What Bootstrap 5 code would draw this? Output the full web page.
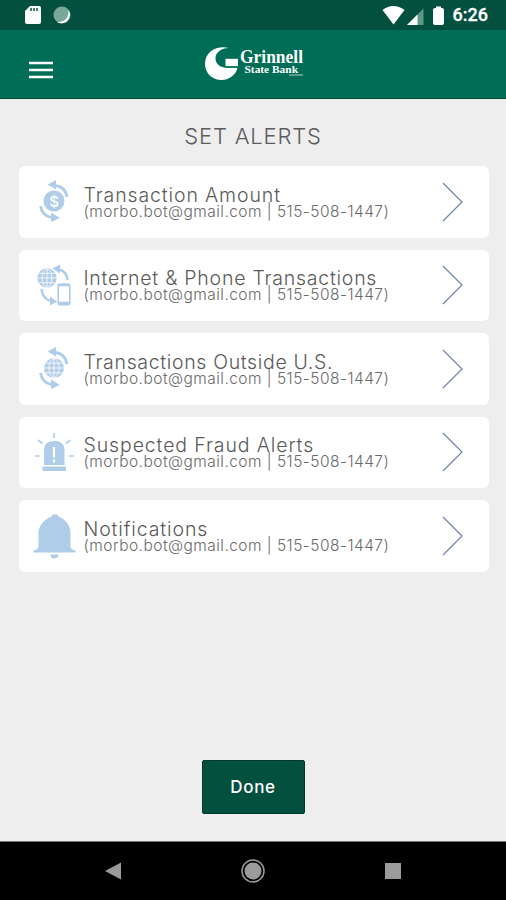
<!DOCTYPE html>
<html lang="en">
<head>
<meta charset="utf-8">
<meta name="viewport" content="width=device-width, initial-scale=1">
<title>Set Alerts</title>
<link href="https://cdn.jsdelivr.net/npm/bootstrap@5.3.0/dist/css/bootstrap.min.css" rel="stylesheet">
<style>
  body { font-family: Inter, "Liberation Sans", sans-serif; background: #eee; height: 900px; overflow: hidden; }
  svg { display: block; flex: none; }
  .status-bar { height: 30px; background: #04503f; padding: 0 18px 0 25px; }
  .clock { font: 500 18px/32px Roboto, sans-serif; color: #fff; margin-left: 8px; -webkit-text-stroke: .3px #fff; }
  .app-bar { height: 69px; background: #006e56; border-bottom: 1px solid #00513c; display: grid; grid-template-columns: 1fr auto 1fr; }
  .menu-btn { margin: 12px 0 0 29px; justify-self: start; }
  .brand-logo { margin: 0 0 1px 4px; }
  .page-title { font-size: 22px; line-height: 26px; font-weight: 300; letter-spacing: .8px; color: #5c5c5c; padding-top: 24px; margin-bottom: 17px; }
  .alert-list { gap: 12px; padding: 0 17.5px 0 18.5px; }
  .alert-row { height: 71.5px; border-radius: 6px; background: #fff; color: #5a5a5a; padding: 0 25px 0 14px; }
  .row-text { margin-left: 8px; }
  .row-title { font-size: 19.5px; line-height: 19px; padding-top: 1px; font-weight: 300; letter-spacing: .88px; white-space: nowrap; }
  .title-phone { letter-spacing: .76px; }
  .title-outside { letter-spacing: .66px; }
  .row-sub { font-size: 15.5px; line-height: 14px; font-weight: 300; letter-spacing: .46px; white-space: nowrap; color: #6a6a6a; }
  .done-btn, .done-btn:hover { width: 103px; height: 54px; border-radius: 2px; border: 1px solid #003a29; background: #04503f; color: #fff; font-size: 17px; font-weight: 500; letter-spacing: .7px; padding-top: 2px !important; margin-bottom: 27px; }
  .nav-keys { height: 59px; background: #000; border-top: 1px solid #777; padding: 0 104px; }
</style>
</head>
<body class="d-flex flex-column">
<svg width="0" height="0" class="position-absolute">
  <defs>
    <g id="arrows" fill="none" stroke="#afcde8" stroke-width="2.8">
      <path d="M23 5.500C29 6.500 33 11 34 17M7.500 26C8.500 32 12 36 18 37.500"/>
      <path fill="#afcde8" stroke="none" d="M14.500 4.500 23 0v9.500ZM27 38l-9-5.500V42Z"/>
    </g>
    <g id="globe">
      <circle r="10" fill="#afcde8"/>
      <g fill="none" stroke="#f4f9fd" stroke-width="1"><ellipse rx="5" ry="9.500"/><path d="M0-10V10M-10 0H10M-8.500-4.800H8.500M-8.500 4.800H8.500"/></g>
    </g>
    <path id="chev" d="M1 1 20 20 1 39" fill="none" stroke="#6f83a8" stroke-width="1.200"/>
  </defs>
</svg>

<header>
  <div class="status-bar d-flex align-items-center">
    <svg width="16" height="20" viewBox="0 0 16 20"><path d="M5 1h9q2 0 2 2v14q0 2-2 2H2q-2 0-2-2V6Z" fill="#fff"/><path d="M6 3v3M9 3v3M12 3v3" stroke="#04503f" stroke-width="1.500"/></svg>
    <svg class="ms-2" width="28" height="20" viewBox="0 0 28 20"><circle cx="13" cy="10" r="8.500" fill="#78a898"/><path d="M19.500 5A8.500 8.500 0 0 1 8 17Q20 17 19.500 5" fill="#fff"/></svg>
    <svg class="ms-auto" width="64" height="22" viewBox="0 0 64 22"><path d="M1.500 6Q12.500-2 23.500 6L12.500 20.500Z" fill="#fff"/><path d="M26 21 42.500 4.500V21Z" fill="#5b9885"/><path d="M26 21 36.500 10.500V21Z" fill="#fff"/><path d="M55 4V2.500h5V4h1q2 0 2 2v13q0 2-2 2h-7q-2 0-2-2V6q0-2 2-2Z" fill="#fff"/></svg>
    <span class="clock">6:26</span>
  </div>
  <nav class="app-bar align-items-center">
    <button class="menu-btn btn p-0 border-0" aria-label="Menu"><svg width="24" height="18" viewBox="0 0 24 18"><path d="M0 2h24M0 9h24M0 16h24" stroke="#fff" stroke-width="2.700"/></svg></button>
    <svg class="brand-logo" width="100" height="36" viewBox="0 0 100 36">
      <path d="M23.500 2C14 -.8 0 4 0 18 0 27 7 34 16.500 34 25 34 31 28.500 32.500 21.800H20.500C14 21 10.500 17 10.500 12.500 10.500 7 15 2.500 23.500 2Z" fill="#fff"/>
      <path d="M20.500 12.800H33V20.300H20.500Z" fill="#fff"/><path d="M20 21H33" stroke="#006e56" stroke-width="1.200"/>
      <g fill="#fff" font-family="Liberation Serif, serif" font-weight="700"><text x="35" y="17" font-size="18" textLength="63" lengthAdjust="spacingAndGlyphs">Grinnell</text><text x="39.500" y="26.500" font-size="11" textLength="53.500" lengthAdjust="spacingAndGlyphs">State Bank</text></g>
      <path d="M84 29h14" stroke="#75ae9e" stroke-width="1.500"/>
    </svg>
  </nav>
</header>

<main class="d-flex flex-column flex-grow-1">
  <h1 class="page-title text-center">SET ALERTS</h1>
  <div class="alert-list d-flex flex-column">
    <a class="alert-row d-flex align-items-center text-decoration-none" href="#">
      <svg width="43" height="43" viewBox="0 0 43 43"><use href="#arrows"/><circle cx="21" cy="21" r="10.500" fill="#afcde8"/><text x="21" y="26.500" font-size="15" font-weight="500" fill="#fff" text-anchor="middle">$</text></svg>
      <div class="row-text"><div class="row-title">Transaction Amount</div><div class="row-sub">(morbo.bot@gmail.com | 515-508-1447)</div></div>
      <svg class="ms-auto" width="22" height="40"><use href="#chev"/></svg>
    </a>
    <a class="alert-row d-flex align-items-center text-decoration-none" href="#">
      <svg width="43" height="43" viewBox="0 0 43 43"><g fill="none" stroke="#afcde8" stroke-width="2.500"><path d="M26 5.500Q34 7.500 34.500 16M8.500 25Q9.500 35 18 37"/><rect x="25.200" y="20.200" width="11.600" height="20.600" rx="1.500" stroke-width="1.600"/><path d="M25 21h12M25 39h12"/></g><path d="M19.500 4.500 27 .5V9.500ZM24 37.500 17 32.500v9Z" fill="#afcde8"/><use href="#globe" transform="translate(14 14)scale(.97)"/></svg>
      <div class="row-text"><div class="row-title title-phone">Internet &amp; Phone Transactions</div><div class="row-sub">(morbo.bot@gmail.com | 515-508-1447)</div></div>
      <svg class="ms-auto" width="22" height="40"><use href="#chev"/></svg>
    </a>
    <a class="alert-row d-flex align-items-center text-decoration-none" href="#">
      <svg width="43" height="43" viewBox="0 0 43 43"><use href="#arrows"/><use href="#globe" transform="translate(21 21)"/></svg>
      <div class="row-text"><div class="row-title title-outside">Transactions Outside U.S.</div><div class="row-sub">(morbo.bot@gmail.com | 515-508-1447)</div></div>
      <svg class="ms-auto" width="22" height="40"><use href="#chev"/></svg>
    </a>
    <a class="alert-row d-flex align-items-center text-decoration-none" href="#">
      <svg width="43" height="43" viewBox="0 0 43 43"><path d="M11 34V19q0-9 10.300-9T31.500 19V34ZM9.500 35.500h23.500V40H9.500Z" fill="#afcde8"/><path d="M21 16v10.500M21 28.500v3" stroke="#fff" stroke-width="2.200"/><path d="M21 2v5M5 9l4.500 3.500M37.500 9 33 12.500M2 25h4.500M36 25h5" stroke="#afcde8" stroke-width="1.600"/></svg>
      <div class="row-text"><div class="row-title">Suspected Fraud Alerts</div><div class="row-sub">(morbo.bot@gmail.com | 515-508-1447)</div></div>
      <svg class="ms-auto" width="22" height="40"><use href="#chev"/></svg>
    </a>
    <a class="alert-row d-flex align-items-center text-decoration-none" href="#">
      <svg width="43" height="46" viewBox="0 0 43 46"><path d="M18.500 3.500C19 .5 25 .5 25.500 3.500 32 6 37.500 12 37.500 20V34Q38 36.500 42.500 37.500V39.500H.5V37.500Q5 36.500 5.500 34V20C5.500 12 12 6 18.500 3.500ZM17.500 41.500h8a4 4 0 0 1-8 0Z" fill="#afcde8"/></svg>
      <div class="row-text"><div class="row-title">Notifications</div><div class="row-sub">(morbo.bot@gmail.com | 515-508-1447)</div></div>
      <svg class="ms-auto" width="22" height="40"><use href="#chev"/></svg>
    </a>
  </div>
  <button class="done-btn btn p-0 mt-auto align-self-center">Done</button>
</main>

<footer class="nav-keys d-flex align-items-center justify-content-between">
  <svg width="18" height="18"><path d="M1 9 17 .5v17Z" fill="#9b9b9b"/></svg>
  <svg width="24" height="24"><circle cx="12" cy="12" r="11" fill="none" stroke="#9b9b9b" stroke-width="1.500"/><circle cx="12" cy="12" r="8.500" fill="#9b9b9b"/></svg>
  <svg width="18" height="18"><rect x="1" y="1" width="16" height="16" fill="#9b9b9b"/></svg>
</footer>
<script src="https://cdn.jsdelivr.net/npm/bootstrap@5.3.0/dist/js/bootstrap.bundle.min.js"></script>
</body>
</html>
